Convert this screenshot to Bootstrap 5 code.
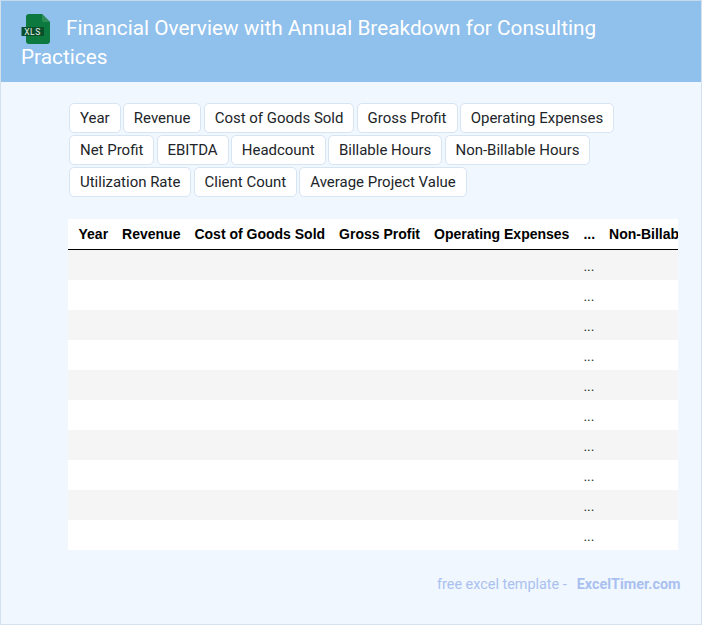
<!DOCTYPE html>
<html lang="en">
<head>
<meta charset="utf-8">
<title>Financial Overview</title>
<link href="https://cdn.jsdelivr.net/npm/bootstrap@5.3.0/dist/css/bootstrap.min.css" rel="stylesheet">
<style>
html,body{height:100%;}
body{margin:0;font-family:Roboto,"Liberation Sans",sans-serif;background:#f0f7ff;overflow:hidden;}
.sheet{width:702px;height:625px;border:1px solid #d5e2ee;border-top-color:#c5d9ec;background:#f0f7ff;overflow:hidden;}
.banner{background:#90c0ec;color:#fff;padding:13px 20px 0;height:81px;font-size:20.8px;line-height:28.6px;font-weight:400;margin:0;}
.xls-icon{display:inline-block;width:30px;height:30px;vertical-align:top;margin-right:15px;margin-bottom:-4px;}
.body-wrap{padding:21px 23px 0 67px;}
.chips{display:flex;flex-wrap:wrap;gap:2px 2.2px;margin-bottom:22px;padding-left:1px;padding-right:40px;}
.chip{background:#fff;border:1px solid #d7e5f3;border-radius:5px;font-size:14.98px;line-height:20px;padding:4px 10px;color:#212529;white-space:nowrap;}
.tbl-scroll{overflow:hidden;background:#fff;}
.tbl{margin:0;font-family:"Liberation Sans",Arial,sans-serif;font-size:14px;width:auto;--bs-table-bg:transparent;border-collapse:collapse;}
.tbl th{font-weight:700;padding:4px 7px 5px;line-height:20px;white-space:nowrap;color:#000;border-bottom:1px solid #000;background:#fff;height:30px;}
.tbl td{height:30px;padding:9px 7px 5px;font-size:13px;line-height:16px;white-space:nowrap;border:0;color:#212529;}
.tbl tbody tr:nth-child(odd) td{background:#f5f5f5;}
.tbl tbody tr:nth-child(even) td{background:#fff;}
.tbl th:first-child,.tbl td:first-child{padding-left:10.5px;}
.credit{margin-top:26px;display:flex;justify-content:flex-end;font-size:14.4px;line-height:17px;color:#aac1ef;}
.credit strong{margin-left:10px;font-weight:700;color:#a9c0f0;margin-right:-2.5px;}
</style>
</head>
<body>
<div class="sheet">
  <h1 class="banner">
    <svg class="xls-icon" viewBox="0 0 30 30" aria-hidden="true">
      <path d="M8 0h13l8 8v19a3 3 0 0 1-3 3H8a3 3 0 0 1-3-3V3a3 3 0 0 1 3-3z" fill="#0c7a3f"/>
      <path d="M21 0l8 8h-6a2 2 0 0 1-2-2z" fill="#2f8d5a"/>
      <rect x="0.5" y="13" width="22.5" height="9" fill="#0a4f2b"/>
      <text x="11.5" y="20.7" text-anchor="middle" font-family="Roboto,sans-serif" font-size="8.5" letter-spacing="0.5" fill="#e8f2ec">XLS</text>
    </svg>Financial Overview with Annual Breakdown for Consulting Practices
  </h1>
  <div class="body-wrap">
    <div class="chips">
      <span class="chip">Year</span><span class="chip">Revenue</span><span class="chip">Cost of Goods Sold</span><span class="chip">Gross Profit</span><span class="chip">Operating Expenses</span><span class="chip">Net Profit</span><span class="chip">EBITDA</span><span class="chip">Headcount</span><span class="chip">Billable Hours</span><span class="chip">Non-Billable Hours</span><span class="chip">Utilization Rate</span><span class="chip">Client Count</span><span class="chip">Average Project Value</span>
    </div>
    <div class="tbl-scroll">
      <table class="table tbl">
        <thead><tr><th>Year</th><th>Revenue</th><th>Cost of Goods Sold</th><th>Gross Profit</th><th>Operating Expenses</th><th>...</th><th>Non-Billable Hours</th></tr></thead>
        <tbody>
          <tr><td></td><td></td><td></td><td></td><td></td><td>...</td><td></td></tr>
          <tr><td></td><td></td><td></td><td></td><td></td><td>...</td><td></td></tr>
          <tr><td></td><td></td><td></td><td></td><td></td><td>...</td><td></td></tr>
          <tr><td></td><td></td><td></td><td></td><td></td><td>...</td><td></td></tr>
          <tr><td></td><td></td><td></td><td></td><td></td><td>...</td><td></td></tr>
          <tr><td></td><td></td><td></td><td></td><td></td><td>...</td><td></td></tr>
          <tr><td></td><td></td><td></td><td></td><td></td><td>...</td><td></td></tr>
          <tr><td></td><td></td><td></td><td></td><td></td><td>...</td><td></td></tr>
          <tr><td></td><td></td><td></td><td></td><td></td><td>...</td><td></td></tr>
          <tr><td></td><td></td><td></td><td></td><td></td><td>...</td><td></td></tr>
        </tbody>
      </table>
    </div>
    <div class="credit"><span>free excel template -</span><strong>ExcelTimer.com</strong></div>
  </div>
</div>
<script src="https://cdn.jsdelivr.net/npm/bootstrap@5.3.0/dist/js/bootstrap.bundle.min.js"></script>
</body>
</html>
